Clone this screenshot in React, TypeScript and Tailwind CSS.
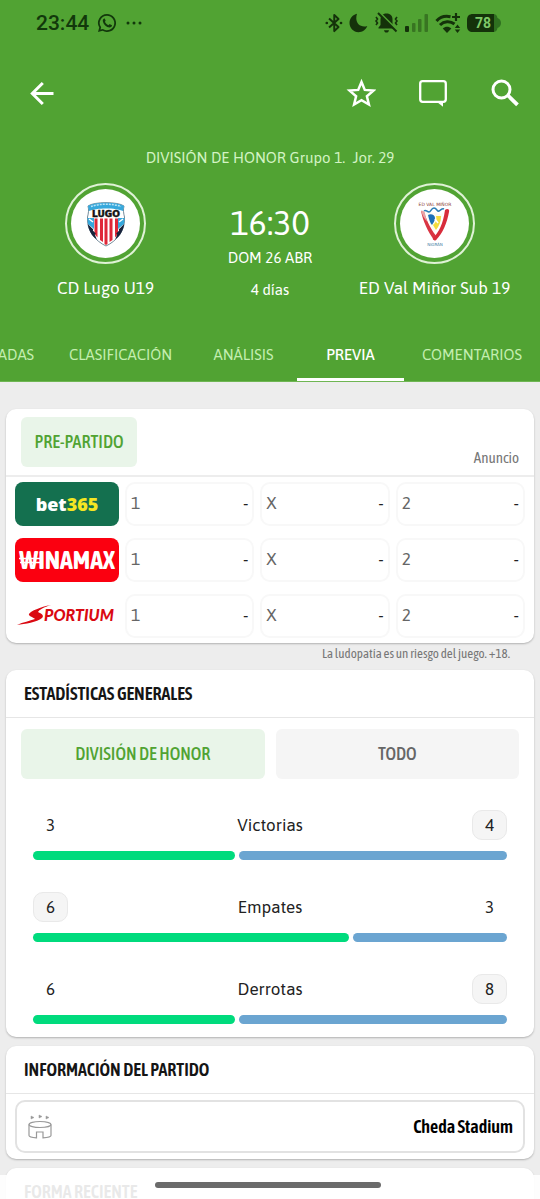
import type { ReactNode } from 'react';

const sans = "font-['Asap','Noto_Sans',sans-serif]";
const narrow = "font-['Asap_Condensed','Liberation_Sans_Narrow','Noto_Sans',sans-serif]";

function StatusBar() {
  return (
    <div className="flex h-[46px] items-center justify-between pr-[39px] pl-9 text-[#12380b]">
      <div className="flex items-center gap-2">
        <span className="font-['Roboto',sans-serif] text-[21px] leading-6 font-medium">23:44</span>
        <svg width="20" height="20" viewBox="0 0 24 24" fill="currentColor" aria-hidden="true">
          <path d="M12 1.2a10.8 10.8 0 0 0-9.3 16.300L1.200 22.800l5.500-1.400A10.800 10.800 0 1 0 12 1.200zm0 2.100a8.700 8.700 0 1 1-4.900 15.900l-2.900.75.78-2.800A8.700 8.700 0 0 1 12 3.300z" />
          <path d="M8.200 6.800c-1 .6-1.400 1.700-1.200 3 .6 3.600 4.400 7.200 8 7.600 1.300.1 2.500-.6 2.900-1.700.2-.7.1-1-.4-1.200l-2-1c-.4-.2-.7-.1-1 .3l-.8.9c-2-.8-3.500-2.300-4.200-4.100l.7-.9c.2-.3.200-.5.1-.8l-.9-1.900c-.2-.4-.7-.5-1.200-.2z" />
        </svg>
        <svg width="18" height="6" viewBox="0 0 18 6" fill="currentColor" aria-hidden="true">
          <circle cx="3" cy="3" r="1.500" />
          <circle cx="9" cy="3" r="1.500" />
          <circle cx="15" cy="3" r="1.500" />
        </svg>
      </div>
      <div className="flex items-center gap-[6px] text-[#14320a]">
        <svg width="18" height="22" viewBox="0 0 20 22" fill="none" stroke="currentColor" strokeWidth="2.200" aria-hidden="true">
          <path d="M4.500 6 L15 15.500 L10.300 20 V2 L15 6.500 L4.500 16" strokeLinejoin="round" />
          <circle cx="2" cy="11" r="1.500" fill="currentColor" stroke="none" />
          <circle cx="17.800" cy="11" r="1.500" fill="currentColor" stroke="none" />
        </svg>
        <svg width="19" height="20" viewBox="0 0 18 20" fill="currentColor" aria-hidden="true">
          <path d="M7.500.8C3.300 1.700 0 5.500 0 10c0 5 4 9.200 9 9.200 4 0 7.500-2.500 8.800-6.200-1 .4-2 .5-3 .5-4.700 0-8-3.600-8-8 0-1.700.2-3.300.7-4.700z" />
        </svg>
        <svg width="25" height="22" viewBox="0 0 25 22" aria-hidden="true">
          <path d="M12.500 1.500c-4 0-6 2.500-6 6v5.500l-2 2.500v1h16v-1l-2-2.500V7.500c0-3.500-2-6-6-6z" fill="currentColor" />
          <path d="M10 18.300h5c-.3 1.600-1.200 2.300-2.500 2.300S10.300 19.900 10 18.300z" fill="currentColor" />
          <path d="M2 5l1.500 2L2 9l1.500 2L2 13M23 5l-1.500 2L23 9l-1.500 2L23 13" fill="none" stroke="currentColor" strokeWidth="1.600" />
          <path d="M5.500.5l18 18" stroke="#51a333" strokeWidth="2" />
          <path d="M4 1l18.500 18.500" stroke="currentColor" strokeWidth="1.900" />
        </svg>
        <svg width="24" height="20" viewBox="0 0 24 20" fill="currentColor" aria-hidden="true">
          <rect x="0" y="13" width="4" height="6" rx="1" />
          <g opacity="0.4">
            <rect x="7" y="10" width="3.500" height="9" rx="1" />
            <rect x="13" y="6" width="3.500" height="13" rx="1" />
            <rect x="19.500" y="1" width="3.500" height="18" rx="1" />
          </g>
        </svg>
        <svg width="26" height="21" viewBox="0 0 26 21" fill="none" stroke="currentColor" aria-hidden="true">
          <path d="M1.500 8C5 4 10 2.500 15.500 3.700" strokeWidth="3" />
          <path d="M5 12c4-4 10-4.500 14.500-1" strokeWidth="3" />
          <path d="M7.800 15.500c2.500-2.300 6-2.300 8.500 0L12 20z" fill="currentColor" stroke="none" />
          <path d="M21 0v8M17 4h8" strokeWidth="2.200" />
          <path d="M22.500 11.500l2.700 3.500h-5.400zM22.500 20l2.700-3.500h-5.400z" fill="currentColor" stroke="none" />
        </svg>
        <svg width="34" height="20" viewBox="0 0 34 20" aria-hidden="true">
          <path d="M26 1c3 0 4 1.500 4.500 4 2 .7 3.500 2.500 3.500 5s-1.500 4.300-3.500 5c-.5 2.500-1.500 4-4.500 4z" fill="#2f7020" />
          <path d="M6 1h21v18H6c-4 0-6-2-6-6V7c0-4 2-6 6-6z" fill="#14320a" />
          <text x="16" y="15" textAnchor="middle" className="font-['Roboto',sans-serif] text-[14px] font-bold" fill="#7fc968">78</text>
        </svg>
      </div>
    </div>
  );
}

function Toolbar() {
  return (
    <div className="flex h-[94px] items-center justify-between pr-5 pl-[29px] text-white">
      <button aria-label="Atrás">
        <svg width="26" height="26" viewBox="0 0 26 26" fill="none" stroke="currentColor" strokeWidth="3">
          <path d="M24.500 13.500H3M13.800 3L3.300 13.500l10.500 10.500" />
        </svg>
      </button>
      <div className="flex items-center gap-[42px]">
        <button aria-label="Favorito">
          <svg width="30" height="30" viewBox="0 0 30 30" fill="none" stroke="currentColor" strokeWidth="2.500">
            <path d="M15.500 4l3.300 7.900 8.600.7-6.500 5.600 2 8.300-7.400-4.400-7.400 4.400 2-8.300-6.500-5.600 8.600-.7z" />
          </svg>
        </button>
        <button aria-label="Comentarios">
          <svg width="30" height="30" viewBox="0 0 30 30" fill="none" stroke="currentColor" strokeWidth="2.300">
            <rect x="2.200" y="3.200" width="25.600" height="20.600" rx="2.500" />
            <path d="M19 24h6v4.800z" fill="currentColor" stroke="none" />
          </svg>
        </button>
        <button aria-label="Buscar">
          <svg width="30" height="30" viewBox="0 0 30 30" fill="none" stroke="currentColor" strokeWidth="3">
            <circle cx="11.500" cy="11.500" r="8.500" />
            <path d="M17.500 17l10 9.800" strokeWidth="3.800" />
          </svg>
        </button>
      </div>
    </div>
  );
}

function LugoCrest() {
  return (
    <svg width="40" height="46" viewBox="0 0 40 46" aria-hidden="true">
      <path d="M2 5C8 .5 32 .5 38 5c-1 4-.5 7 .500 11 1 14-8 24-18.500 29C9.500 40 .5 30 1.500 16 2.500 12 3 9 2 5z" fill="#fff" stroke="#3a5a70" strokeWidth="0.700" />
      <path d="M2 5C8 .5 32 .5 38 5l-1 5C30 6.500 10 6.500 3 10z" fill="#36a8dc" />
      <path d="M5 5.500C13 2.500 27 2.500 35 5.500" fill="none" stroke="#b9e4f6" strokeWidth="1.500" strokeDasharray="2 1" />
      <path d="M1.500 17h6.500v11l-6-5zM38.500 17h-6.500v11l6-5z" fill="#36a8dc" />
      <path d="M3 18l4 3M37 18l-4 3" stroke="#fff" strokeWidth="1.500" />
      <path d="M8.500 17.500h3v19l-3-3.500zM14 17.500h3v23.500l-3-2zM18.500 17.500h3v25.500l-1.500 1-1.500-1zM23.500 17.500h3v21.500l-3 2zM29 17.500h3v15.500l-3 3.500z" fill="#df2737" />
      <path d="M1.800 23c.7 6 4 12 9 15.500l-2-5 1-1-3-3 .5-1zM38.200 23c-.7 6-4 12-9 15.500l2-5-1-1 3-3-.5-1z" fill="#18233b" />
      <text x="20" y="16" textAnchor="middle" className="font-['DejaVu_Sans',sans-serif] text-[9px] font-bold" fill="#111" stroke="#111" strokeWidth="0.500">LUGO</text>
    </svg>
  );
}

function ValMinorCrest() {
  return (
    <svg width="38" height="46" viewBox="0 0 38 46" aria-hidden="true">
      <text x="19" y="4.500" textAnchor="middle" className="font-['DejaVu_Sans',sans-serif] text-[4.500px]" fill="#8a3a35">ED VAL MIÑOR</text>
      <path d="M8 8l10 24 10-21c-3 3-6 3-8 0-3 2-6 1-8-1z" fill="#fbfbf4" />
      <path d="M5 10c2 10 7 21 13 29 1 1 3 0 3-3-5-6-10-15-13-25z" fill="#d93543" />
      <path d="M5 9.500c2 0 4 1 4 3l2 8c-3-3-5-7-6-11z" fill="#e9a3a5" />
      <path d="M29 9c2-2 5-1 4 2-2 11-6 21-13 28-2 1-4-1-3-2 6-6 10-14 12-28z" fill="#d82c3b" />
      <path d="M12 14c3-2 7 0 7 3 0 3-2 5-3 7-2-2-3-6-4-10z" fill="#1b6fb8" />
      <path d="M20 15h5c0 6-2 10-5 14l-3-5c3-3 4-5 3-9z" fill="#f2dc3d" />
      <path d="M19 18l3 4" stroke="#fff" strokeWidth="1.500" />
      <path d="M8 10c2-2 3 1 5 1s2-4 5-4 3 4 5 3 3-3 5-2" fill="none" stroke="#2a7cb7" strokeWidth="1.500" />
      <text x="19" y="44.500" textAnchor="middle" className="font-['DejaVu_Sans',sans-serif] text-[4px]" fill="#3f7ca3">NIGRÁN</text>
    </svg>
  );
}

function Team({ name, children }: { name: string; children: ReactNode }) {
  return (
    <div className="flex flex-col items-center text-white">
      <div className="rounded-full border-2 border-[#dff2d6] p-1">
        <div className="flex size-[69px] items-center justify-center rounded-full bg-white">{children}</div>
      </div>
      <p className="mt-3 text-[17px] leading-6 whitespace-nowrap">{name}</p>
    </div>
  );
}

const tabs = [
  { label: 'JORNADAS', width: 'min-w-[107px]' },
  { label: 'CLASIFICACIÓN', width: 'min-w-[139px]' },
  { label: 'ANÁLISIS', width: 'min-w-[107px]' },
  { label: 'PREVIA', width: 'min-w-[107px]', active: true },
  { label: 'COMENTARIOS', width: 'min-w-[136px]' },
];

function Header() {
  return (
    <header className="shrink-0 border-b border-[#6fb653] bg-[#51a333]">
      <StatusBar />
      <Toolbar />
      <p className="mt-2 text-center text-[15px] leading-5 whitespace-pre text-[#d3f3c4]">DIVISIÓN DE HONOR Grupo 1.  Jor. 29</p>
      <div className="mt-[15px] grid grid-cols-[211px_1fr_211px]">
        <Team name="CD Lugo U19"><LugoCrest /></Team>
        <div className="flex flex-col items-center text-white">
          <p className="mt-5 text-[34px] leading-10">16:30</p>
          <p className="mt-[3px] text-[15px] leading-6">DOM 26 ABR</p>
          <p className="mt-2 text-[15px] leading-6">4 días</p>
        </div>
        <Team name="ED Val Miñor Sub 19"><ValMinorCrest /></Team>
      </div>
      <nav className="mt-[29px] flex justify-end overflow-hidden">
        {tabs.map((t) => (
          <a
            key={t.label}
            href="#"
            className={`${t.width} shrink-0 border-b-[3px] pt-[14px] pb-[13px] text-center text-[15px] leading-5 ${t.active ? 'border-white font-medium text-white' : 'border-transparent text-[#c4eeb0]'}`}
          >
            {t.label}
          </a>
        ))}
      </nav>
    </header>
  );
}

function Card({ title, children, faded }: { title?: string; children?: ReactNode; faded?: boolean }) {
  return (
    <section className="mx-[6px] shrink-0 rounded-[10px] bg-white shadow-[0_1px_2px_rgba(0,0,0,0.25)]">
      {title && (
        <h2 className={`${narrow} border-b border-[#e6e6e6] px-[18px] pt-3 pb-[11px] text-lg leading-6 font-semibold ${faded ? 'text-[#222]' : 'text-[#151515]'}`}>{title}</h2>
      )}
      {children}
    </section>
  );
}

function Bet365() {
  return (
    <div className="flex h-11 items-center justify-center rounded-lg bg-[#14704f] font-['Noto_Sans',sans-serif] text-lg font-black text-white">
      bet<span className="text-[#f5e622]">365</span>
    </div>
  );
}

function Winamax() {
  return (
    <div className="flex h-11 items-center justify-center rounded-lg bg-[#fb0010]">
      <svg width="100" height="30" viewBox="0 0 100 30" aria-label="Winamax">
        <text x="50" y="24" textAnchor="middle" className={`${narrow} text-[26px] font-bold`} fill="#fff">WINAMAX</text>
        <path d="M2 13.500h22M3 17.500h20" stroke="#fff" strokeWidth="1.500" />
      </svg>
    </div>
  );
}

function Sportium() {
  return (
    <div className="flex h-11 items-center justify-center">
      <svg width="100" height="24" viewBox="0 0 100 24" aria-label="Sportium">
        <path d="M34 1C23 3 14 7 12 10c-1 2 4 3 6 5C13 17 6 18 0 21c8-1 20-3 25-7 3-3-2-5-4-6C22 6 27 3 34 1z" fill="#da0912" />
        <text x="62" y="17" textAnchor="middle" className="font-['Lato',sans-serif] text-[16px] font-black italic" fill="#da0912">PORTIUM</text>
      </svg>
    </div>
  );
}

function OddsRow({ children }: { children: ReactNode }) {
  return (
    <div className="grid grid-cols-[104px_1fr_1fr_1fr] gap-[6px]">
      {children}
      {['1', 'X', '2'].map((o) => (
        <button key={o} className="flex h-11 items-center justify-between rounded-[10px] border-2 border-[#f8f8f8] px-1 text-[17px]">
          <span className="text-[#666]">{o}</span>
          <span className="font-medium text-[#222]">-</span>
        </button>
      ))}
    </div>
  );
}

const stats = [
  { label: 'Victorias', home: 3, away: 4, share: 42.6 },
  { label: 'Empates', home: 6, away: 3, share: 66.6 },
  { label: 'Derrotas', home: 6, away: 8, share: 42.6 },
];

function Value({ value, best }: { value: number; best: boolean }) {
  return (
    <span className={`flex h-[30px] w-[35px] items-center justify-center rounded-[10px] border ${best ? 'border-[#e9e9e9] bg-[#f5f5f5]' : 'border-transparent'}`}>{value}</span>
  );
}

export default function App() {
  return (
    <div className={`${sans} relative flex h-screen flex-col overflow-hidden bg-[#ededed]`}>
      <Header />
      <main className="flex flex-col pt-[27px]">
        <Card>
          <div className="flex items-end justify-between border-b-2 border-[#ededed] px-[15px] py-2">
            <button className={`${narrow} h-[50px] w-[116px] rounded-md bg-[#e9f5e9] text-lg font-medium text-[#51a333]`}>PRE-PARTIDO</button>
            <span className={`${narrow} text-[15px] leading-[18px] text-[#777]`}>Anuncio</span>
          </div>
          <div className="flex flex-col gap-3 px-[9px] py-[5px]">
            <OddsRow><Bet365 /></OddsRow>
            <OddsRow><Winamax /></OddsRow>
            <OddsRow><Sportium /></OddsRow>
          </div>
        </Card>
        <p className={`${narrow} mt-[3px] mb-2 pr-[30px] text-right text-[13px] leading-4 text-[#777]`}>La ludopatía es un riesgo del juego. +18.</p>
        <Card title="ESTADÍSTICAS GENERALES">
          <div className={`${narrow} grid grid-cols-2 gap-[11px] px-[15px] pt-[11px] text-lg font-medium`}>
            <button className="h-[50px] rounded-md bg-[#e9f5e9] text-[#51a333]">DIVISIÓN DE HONOR</button>
            <button className="h-[50px] rounded-md bg-[#f5f5f5] text-[#666]">TODO</button>
          </div>
          <div className="flex flex-col gap-8 px-[27px] pt-[31px] pb-[13px]">
            {stats.map((s) => (
              <div key={s.label}>
                <div className="flex items-center justify-between text-[17px] leading-6 text-[#222]">
                  <Value value={s.home} best={s.home > s.away} />
                  <span>{s.label}</span>
                  <Value value={s.away} best={s.away > s.home} />
                </div>
                <div className="mt-[11px] flex h-[9px] gap-1">
                  <div className="rounded-full bg-[#00db7d]" style={{ width: `${s.share}%` }} />
                  <div className="flex-1 rounded-full bg-[#6ba5d1]" />
                </div>
              </div>
            ))}
          </div>
        </Card>
        <div className="h-[9px] shrink-0" />
        <Card title="INFORMACIÓN DEL PARTIDO">
          <div className="px-[9px] py-[6px]">
            <div className="flex h-[53px] items-center justify-between rounded-[10px] border-2 border-[#e2e2e2] px-[10px]">
              <svg width="26" height="26" viewBox="0 0 26 26" fill="none" stroke="#999" strokeWidth="1.200" aria-hidden="true">
                <path d="M4 2l3 1.500L4 5zM12 1l3 1.500L12 4zM19 2l3 1.500L19 5z" fill="#999" strokeWidth="0.500" />
                <ellipse cx="13" cy="10.500" rx="11" ry="3" />
                <path d="M2 10.500v11c0 1 3 2 7.500 2.300V18h6.500v5.800c5-.3 8-1.300 8-2.300v-11" />
              </svg>
              <span className={`${narrow} text-lg leading-6 font-semibold text-black`}>Cheda Stadium</span>
            </div>
          </div>
        </Card>
        <div className="h-[9px] shrink-0" />
        <Card title="FORMA RECIENTE" faded />
      </main>
      <div className="absolute inset-x-0 bottom-0 flex h-6 justify-center bg-white/90 pt-[7px] pr-1">
        <div className="h-[6px] w-[42%] rounded-full bg-[#6b6b6b]" />
      </div>
    </div>
  );
}
